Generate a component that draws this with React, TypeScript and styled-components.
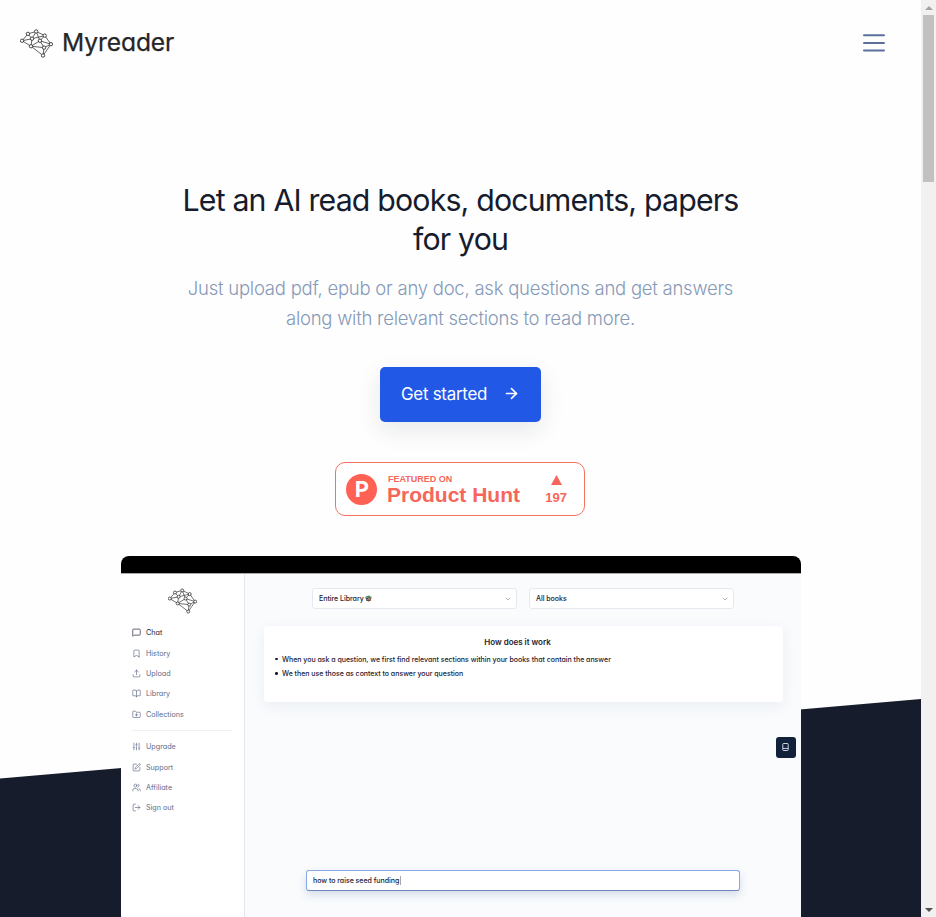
import React from "react";
import styled, { createGlobalStyle, css } from "styled-components";
import {
  MessageSquare,
  Bookmark,
  Upload,
  BookOpen,
  FolderPlus,
  SlidersVertical,
  SquarePen,
  Users,
  LogOut,
  ArrowRight,
  ChevronDown,
  LucideIcon,
} from "lucide-react";

const GlobalStyle = createGlobalStyle`
  *, *::before, *::after { box-sizing: border-box; }
  body { margin: 0; background: #fff; overflow: hidden; }
  h1, h2, p, ul { margin: 0; padding: 0; font-weight: inherit; }
  button { font: inherit; border: 0; padding: 0; background: none; }
`;

const Window = styled.div`
  display: flex;
  height: 917px;
  overflow: hidden;
  font-family: Inter, "Liberation Sans", sans-serif;
`;

const Page = styled.div`
  position: relative;
  flex: 1;
  display: flex;
  flex-direction: column;
  isolation: isolate;
  overflow: hidden;
  background: #fefefe;

  &::before {
    content: "";
    position: absolute;
    inset: 699px 0 0;
    z-index: -1;
    background: #161c2b;
    clip-path: polygon(0 79.5px, 100% 0, 100% 100%, 0 100%);
  }
`;

const Header = styled.header`
  flex: none;
  display: flex;
  align-items: center;
  justify-content: space-between;
  height: 87px;
  padding: 0 35px 0 20px;
`;

const Brand = styled.div`
  display: flex;
  align-items: center;
  gap: 9px;
  color: #262628;
`;

const BrandName = styled.span`
  font-size: 24.6px;
  line-height: 30px;
  font-weight: 400;
  letter-spacing: -0.1px;
  font-feature-settings: "cv11";
  -webkit-text-stroke: 0.25px currentColor;
  transform: translateY(-2px);
`;

const MenuButton = styled.button`
  display: flex;
  margin-bottom: 1px;
  color: #5a6f9a;
`;

const Hero = styled.section`
  display: flex;
  flex-direction: column;
  align-items: center;
  padding-top: 94px;
  text-align: center;
`;

const Title = styled.h1`
  width: 600px;
  font-size: 30.3px;
  line-height: 39px;
  letter-spacing: -0.83px;
  color: #161c2d;
`;

const Lead = styled.p`
  width: 580px;
  margin-top: 14px;
  font-size: 18.5px;
  font-weight: 300;
  line-height: 30px;
  letter-spacing: -0.24px;
  color: #869ab8;
`;

const StartButton = styled.button`
  display: flex;
  align-items: center;
  justify-content: space-between;
  width: 161px;
  height: 55px;
  margin-top: 34px;
  padding: 0 21px 1px;
  border-radius: 5px;
  background: #2158e6;
  box-shadow: 0 8px 24px rgba(22, 28, 45, 0.1);
  color: #fff;
  font-size: 16.9px;
  letter-spacing: -0.26px;

  svg { transform: translate(0, -1px); }
`;

const HuntBadge = styled.a`
  display: flex;
  align-items: center;
  width: 250px;
  height: 54px;
  margin: 40px 1px 0 0;
  padding: 0 17px 0 10px;
  border: 1px solid #f4705f;
  border-radius: 10px;
  background: #fff;
  color: #f7665a;
  font-family: "Liberation Sans", Arial, sans-serif;
  font-weight: 700;
`;

const HuntMark = styled.span`
  display: flex;
  align-items: center;
  justify-content: center;
  width: 31px;
  height: 31px;
  padding-left: 1px;
  border-radius: 50%;
  background: #ff6154;
  color: #fff;
  font: 700 22px/31px Inter, sans-serif;
`;

const HuntText = styled.span`
  display: flex;
  flex-direction: column;
  flex: 1;
  margin-left: 10px;
  text-align: left;
`;

const HuntKicker = styled.span`
  padding-left: 1px;
  font-size: 9px;
  line-height: 10px;
`;

const HuntName = styled.span`
  font-size: 21px;
  line-height: 21px;
`;

const HuntVotes = styled.span`
  display: flex;
  flex-direction: column;
  align-items: center;
  gap: 6px;
  padding-top: 2px;
  font-size: 13px;
  line-height: 14px;
`;

const Preview = styled.div`
  width: 680px;
  height: 400px;
  margin: 40px 0 0 1px;
  border-radius: 8px 8px 0 0;
  overflow: hidden;
  background: #fff;
  text-align: left;
  font-size: 7px;
  letter-spacing: -0.015px;
  font-weight: 500;
  font-feature-settings: "cv11";
  color: #1b2030;
`;

const PreviewBar = styled.div`
  height: 16.5px;
  background: #000;
`;

const PreviewBody = styled.div`
  display: flex;
  height: 383.5px;
  border-top: 1px solid #a9aaab;
`;

const Sidebar = styled.aside`
  display: flex;
  flex-direction: column;
  width: 124px;
  padding: 14.5px 11px 0;
  border-right: 1px solid #e3e8ef;
`;

const SidebarLogo = styled.div`
  display: flex;
  justify-content: center;
  height: 26px;
  margin-bottom: 8.5px;
  color: #222;
`;

const NavItem = styled.a<{ $active?: boolean }>`
  display: flex;
  align-items: center;
  gap: 5px;
  height: 20.35px;
  font-size: 7.2px;
  font-weight: 400;
  letter-spacing: 0;
  color: #5f6b88;

  svg { flex: none; }

  ${(p) =>
    p.$active &&
    css`
      color: #1b2030;
    `}
`;

const NavDivider = styled.div`
  height: 1px;
  margin: 6px 1px 5.3px 0;
  background: #edf0f5;
`;

const Workspace = styled.main`
  flex: 1;
  display: flex;
  flex-direction: column;
  position: relative;
  padding: 14.5px 18px 0;
  background: #f9fbfd;
`;

const Filters = styled.div`
  display: flex;
  gap: 12px;
  margin-left: 49px;
`;

const Select = styled.div`
  display: flex;
  align-items: center;
  justify-content: space-between;
  width: 205px;
  height: 21px;
  padding: 0 4px 0 6px;
  border: 1px solid #e6eaf0;
  border-radius: 3px;
  background: #fff;

  & > svg { color: #8a93a6; }
`;

const SelectValue = styled.span`
  display: flex;
  align-items: center;
  gap: 1.5px;
`;

const HelpCard = styled.section`
  height: 76px;
  margin: 17px 0 0 1px;
  padding: 11px 11px 0;
  border-radius: 4px;
  background: #fff;
  box-shadow: 0 4px 14px rgba(40, 60, 100, 0.07);
`;

const HelpTitle = styled.h2`
  margin-left: -12px;
  margin-bottom: 4px;
  text-align: center;
  font-size: 8px;
  line-height: 11px;
  font-weight: 600;
`;

const HelpItem = styled.li`
  display: flex;
  align-items: center;
  gap: 4px;
  height: 14.3px;
  white-space: nowrap;
  list-style: none;

  &::before {
    content: "";
    width: 2.6px;
    height: 2.6px;
    margin-right: 0.4px;
    border-radius: 50%;
    background: currentColor;
  }
`;

const FloatingButton = styled.button`
  position: absolute;
  top: 163px;
  right: 5px;
  display: flex;
  align-items: center;
  justify-content: center;
  width: 20.5px;
  height: 21px;
  border-radius: 3px;
  background: #12213a;
  color: #dfe6f2;
`;

const PromptField = styled.div`
  display: flex;
  align-items: center;
  width: 434px;
  height: 21px;
  margin: 168px 0 0 43px;
  padding-left: 6px;
  border: 1px solid #87a9df;
  border-bottom-color: #6c86b9;
  border-radius: 3px;
  background: #fff;
  box-shadow: 0 4px 9px rgba(60, 90, 150, 0.18);
`;

const Caret = styled.span`
  width: 1px;
  height: 9px;
  margin-left: 0.6px;
  background: #a5a8b0;
`;

const Scrollbar = styled.div`
  flex: none;
  display: flex;
  flex-direction: column;
  align-items: center;
  width: 15px;
  background: #f1f1f1;
`;

const ScrollArrow = styled.span<{ $down?: boolean }>`
  display: flex;
  align-items: center;
  justify-content: center;
  height: 15px;
  color: ${(p) => (p.$down ? "#505050" : "#a3a3a3")};
  svg { transform: ${(p) => (p.$down ? "rotate(180deg)" : "none")}; }
`;

const ScrollTrack = styled.div`
  flex: 1;
`;

const ScrollThumb = styled.div`
  width: 11px;
  height: 167px;
  background: #c1c1c1;
`;

const NODES: [number, number][] = [
  [31, 62], [48, 42], [72, 35], [97, 47], [115, 72],
  [92, 105], [57, 78], [60, 56], [83, 62], [95, 82],
];
const EDGES: [number, number][] = [
  [0, 1], [1, 2], [2, 3], [3, 4], [4, 5], [5, 6], [6, 0], [0, 7], [1, 7], [2, 7],
  [2, 8], [3, 8], [8, 9], [6, 7], [6, 8], [6, 9], [4, 9], [5, 9], [7, 3], [8, 4],
];

function BrainLogo({ width, height }: { width: number; height: number }) {
  return (
    <svg width={width} height={height} viewBox="25 29 96 82" fill="#fff" stroke="currentColor" strokeWidth="2.1">
      {EDGES.map(([a, b]) => (
        <line key={`${a}-${b}`} x1={NODES[a][0]} y1={NODES[a][1]} x2={NODES[b][0]} y2={NODES[b][1]} />
      ))}
      {NODES.map(([x, y]) => (
        <circle key={`${x}-${y}`} cx={x} cy={y} r="4.9" strokeWidth="2.4" />
      ))}
    </svg>
  );
}

function MenuIcon() {
  return (
    <svg width="24" height="20" viewBox="0 0 24 20" stroke="currentColor" strokeWidth="2" strokeLinecap="round">
      <path d="M2 2.2h20M2 9.9h20M2 17.6h20" />
    </svg>
  );
}

function Triangle({ width, height }: { width: number; height: number }) {
  return (
    <svg width={width} height={height} viewBox="0 0 10 10" preserveAspectRatio="none">
      <path d="M5 0 10 10H0Z" fill="currentColor" />
    </svg>
  );
}

function BooksIcon() {
  return (
    <svg width="7" height="7" viewBox="0 0 14 14">
      <path d="M1 3 8 1l5 3-6 3z" fill="#3f8f57" />
      <path d="M1 4l6 3v3L1 7z" fill="#27495f" />
      <path d="M7 7l6-3v3l-6 3z" fill="#a04434" />
      <path d="M2 8l5 2 5-2v3l-5 2-5-2z" fill="#6b4a3c" />
    </svg>
  );
}

function DeviceIcon() {
  return (
    <svg width="7" height="8" viewBox="0 0 7 8" fill="none" stroke="currentColor" strokeWidth="0.9">
      <rect x="0.8" y="0.5" width="5.4" height="7" rx="0.7" />
      <path d="M0.8 5.4h5.4" />
    </svg>
  );
}

type Entry = { label: string; icon: LucideIcon; active?: boolean };

const PRIMARY: Entry[] = [
  { label: "Chat", icon: MessageSquare, active: true },
  { label: "History", icon: Bookmark },
  { label: "Upload", icon: Upload },
  { label: "Library", icon: BookOpen },
  { label: "Collections", icon: FolderPlus },
];
const SECONDARY: Entry[] = [
  { label: "Upgrade", icon: SlidersVertical },
  { label: "Support", icon: SquarePen },
  { label: "Affiliate", icon: Users },
  { label: "Sign out", icon: LogOut },
];

function NavGroup({ items }: { items: Entry[] }) {
  return (
    <>
      {items.map(({ label, icon: Icon, active }) => (
        <NavItem key={label} $active={active}>
          <Icon size={9} strokeWidth={1.8} />
          {label}
        </NavItem>
      ))}
    </>
  );
}

export default function App() {
  return (
    <Window>
      <GlobalStyle />
      <Page>
        <Header>
          <Brand>
            <BrainLogo width={33} height={29} />
            <BrandName>Myreader</BrandName>
          </Brand>
          <MenuButton aria-label="Menu">
            <MenuIcon />
          </MenuButton>
        </Header>
        <Hero>
          <Title>
            Let an AI read books, documents, papers
            <br />
            for you
          </Title>
          <Lead>
            Just upload pdf, epub or any doc, ask questions and get answers
            <br />
            along with relevant sections to read more.
          </Lead>
          <StartButton>
            Get started
            <ArrowRight size={17} strokeWidth={2.4} />
          </StartButton>
          <HuntBadge>
            <HuntMark>P</HuntMark>
            <HuntText>
              <HuntKicker>FEATURED ON</HuntKicker>
              <HuntName>Product Hunt</HuntName>
            </HuntText>
            <HuntVotes>
              <Triangle width={11} height={10} />
              197
            </HuntVotes>
          </HuntBadge>
          <Preview>
            <PreviewBar />
            <PreviewBody>
              <Sidebar>
                <SidebarLogo>
                  <BrainLogo width={29} height={26} />
                </SidebarLogo>
                <NavGroup items={PRIMARY} />
                <NavDivider />
                <NavGroup items={SECONDARY} />
              </Sidebar>
              <Workspace>
                <Filters>
                  <Select>
                    <SelectValue>
                      Entire Library <BooksIcon />
                    </SelectValue>
                    <ChevronDown size={8} />
                  </Select>
                  <Select>
                    <SelectValue>All books</SelectValue>
                    <ChevronDown size={8} />
                  </Select>
                </Filters>
                <HelpCard>
                  <HelpTitle>How does it work</HelpTitle>
                  <ul>
                    <HelpItem>
                      When you ask a question, we first find relevant sections within your books that contain the answer
                    </HelpItem>
                    <HelpItem>We then use those as context to answer your question</HelpItem>
                  </ul>
                </HelpCard>
                <PromptField>
                  how to raise seed funding
                  <Caret />
                </PromptField>
                <FloatingButton aria-label="Open book">
                  <DeviceIcon />
                </FloatingButton>
              </Workspace>
            </PreviewBody>
          </Preview>
        </Hero>
      </Page>
      <Scrollbar>
        <ScrollArrow>
          <Triangle width={8} height={4} />
        </ScrollArrow>
        <ScrollThumb />
        <ScrollTrack />
        <ScrollArrow $down>
          <Triangle width={8} height={4} />
        </ScrollArrow>
      </Scrollbar>
    </Window>
  );
}
